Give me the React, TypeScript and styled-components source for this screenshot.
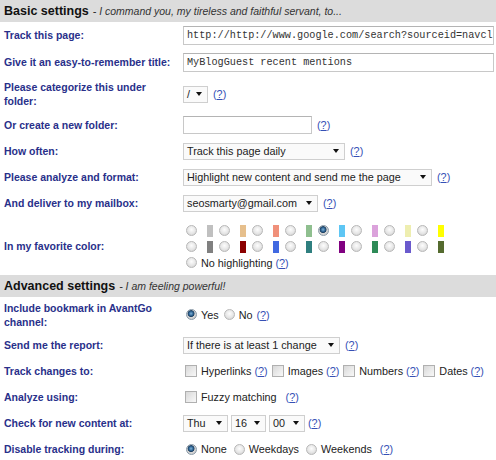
import React from 'react'
import styled, { createGlobalStyle, css } from 'styled-components'

const GlobalStyle = createGlobalStyle`
  body {
    margin: 0;
    background: #fff;
    font-family: "Liberation Sans", Arial, sans-serif;
  }
`

const Page = styled.div`
  width: 496px;
  overflow: hidden;
`

const SectionHeader = styled.div`
  height: 22px;
  display: flex;
  align-items: center;
  padding-left: 4px;
  background: #dcdcdc;
  white-space: nowrap;

  .title {
    font-size: 12.5px;
    font-weight: 700;
    color: #111;
  }

  .sub {
    margin-left: 4px;
    font-size: 10.5px;
    font-style: italic;
    color: #333;
  }
`

const Row = styled.div<{ $h: number }>`
  display: grid;
  grid-template-columns: 183px 1fr;
  align-items: center;
  height: ${(p) => p.$h}px;
`

const Label = styled.div`
  padding-left: 4px;
  font-size: 10.5px;
  font-weight: 700;
  line-height: 14px;
  color: #29308a;
`

const Controls = styled.div<{ $gap?: number }>`
  display: flex;
  align-items: center;
  gap: ${(p) => p.$gap ?? 5}px;
  font-size: 10.8px;
  color: #222;
  white-space: nowrap;
`

const TextBox = styled.div<{ $w: number; $h?: number }>`
  box-sizing: border-box;
  width: ${(p) => p.$w}px;
  height: ${(p) => p.$h ?? 19}px;
  display: flex;
  align-items: center;
  padding-left: 3px;
  border: 1px solid #c8c8c8;
  border-top-color: #b4b4b4;
  background: #fff;
  font-family: "Liberation Mono", "Courier New", monospace;
  font-size: 10.2px;
  color: #333;
  overflow: hidden;
  white-space: nowrap;
`

const SelectBox = styled.div<{ $w: number }>`
  box-sizing: border-box;
  width: ${(p) => p.$w}px;
  height: 17px;
  display: flex;
  align-items: center;
  justify-content: space-between;
  padding: 0 5px 0 3px;
  border: 1px solid #cfcfcf;
  background: #fafafa;
  font-size: 10.8px;
  color: #222;
`

const Help = styled.span`
  color: #3550b5;
  font-size: 10.8px;

  u {
    text-decoration: underline;
  }
`

const Radio = styled.span<{ $checked?: boolean }>`
  display: inline-block;
  flex: none;
  box-sizing: border-box;
  width: 11px;
  height: 11px;
  border-radius: 50%;
  border: 1px solid #b8b8b8;
  background: radial-gradient(circle at 50% 40%, #fdfdfd 0%, #e6e6e6 55%, #c9c9c9 100%);

  ${(p) =>
    p.$checked &&
    css`
      border-color: #8a9aa8;
      background: radial-gradient(
        circle at 45% 40%,
        #7fb2d8 0%,
        #2a5f8e 30%,
        #1d3f60 42%,
        #d6d6d6 52%,
        #c4c4c4 100%
      );
    `}
`

const Check = styled.span`
  display: inline-block;
  flex: none;
  box-sizing: border-box;
  width: 12px;
  height: 12px;
  border: 1px solid #b0b0b0;
  background: linear-gradient(135deg, #d8d8d8 0%, #ececec 60%, #f8f8f8 100%);
`

const Option = styled.span<{ $ml?: number }>`
  display: inline-flex;
  align-items: center;
  gap: 4px;
  margin-left: ${(p) => p.$ml ?? 0}px;
`

const Swatches = styled.div`
  display: flex;
  flex-direction: column;
`

const SwatchRow = styled.div`
  display: flex;
  align-items: center;
  height: 16px;
  padding-left: 3px;
`

const Pair = styled.span`
  display: inline-flex;
  align-items: center;
  width: 33px;
`

const Swatch = styled.span<{ $c: string }>`
  display: inline-block;
  width: 6px;
  height: 12px;
  margin-left: 10px;
  background: ${(p) => p.$c};
`

const NoHighlight = styled.div`
  display: flex;
  align-items: center;
  gap: 4px;
  margin-top: 2px;
  padding-left: 3px;
  font-size: 10.8px;
  color: #222;
`

const Arrow = () => (
  <svg width="6" height="4" viewBox="0 0 6 4">
    <path d="M0 0 L6 0 L3 4 Z" fill="#111" />
  </svg>
)

const Select = ({ w, text }: { w: number; text: string }) => (
  <SelectBox $w={w}>
    <span>{text}</span>
    <Arrow />
  </SelectBox>
)

const Q = () => (
  <Help>
    (<u>?</u>)
  </Help>
)

const topColors = ['#c0c0c0', '#e6bf8c', '#f0907a', '#8fbf8f', '#5ec6f4', '#dba2db', '#eeeeb0', '#ffff00']
const bottomColors = ['#808080', '#8b0000', '#4169e1', '#2f7f7f', '#800080', '#2e8b57', '#6a5acd', '#556b2f']

const App = () => {
  return (
    <Page>
      <GlobalStyle />
      <SectionHeader>
        <span className="title">Basic settings</span>
        <span className="sub">- I command you, my tireless and faithful servant, to...</span>
      </SectionHeader>

      <Row $h={26}>
        <Label>Track this page:</Label>
        <Controls>
          <TextBox $w={311}>http://http://www.google.com/search?sourceid=navcl</TextBox>
        </Controls>
      </Row>
      <Row $h={28}>
        <Label>Give it an easy-to-remember title:</Label>
        <Controls>
          <TextBox $w={311}>MyBlogGuest recent mentions</TextBox>
        </Controls>
      </Row>
      <Row $h={36}>
        <Label>
          Please categorize this under
          <br />
          folder:
        </Label>
        <Controls>
          <Select w={25} text="/" />
          <Q />
        </Controls>
      </Row>
      <Row $h={26}>
        <Label>Or create a new folder:</Label>
        <Controls>
          <TextBox $w={129} $h={18} />
          <Q />
        </Controls>
      </Row>
      <Row $h={26}>
        <Label>How often:</Label>
        <Controls>
          <Select w={162} text="Track this page daily" />
          <Q />
        </Controls>
      </Row>
      <Row $h={26}>
        <Label>Please analyze and format:</Label>
        <Controls>
          <Select w={249} text="Highlight new content and send me the page" />
          <Q />
        </Controls>
      </Row>
      <Row $h={26}>
        <Label>And deliver to my mailbox:</Label>
        <Controls>
          <Select w={135} text="seosmarty@gmail.com" />
          <Q />
        </Controls>
      </Row>
      <Row $h={59}>
        <Label>In my favorite color:</Label>
        <Swatches>
          <SwatchRow>
            {topColors.map((c, i) => (
              <Pair key={c}>
                <Radio $checked={i === 4} />
                <Swatch $c={c} />
              </Pair>
            ))}
          </SwatchRow>
          <SwatchRow>
            {bottomColors.map((c) => (
              <Pair key={c}>
                <Radio />
                <Swatch $c={c} />
              </Pair>
            ))}
          </SwatchRow>
          <NoHighlight>
            <Radio />
            <span>
              No highlighting <Q />
            </span>
          </NoHighlight>
        </Swatches>
      </Row>

      <SectionHeader>
        <span className="title">Advanced settings</span>
        <span className="sub">- I am feeling powerful!</span>
      </SectionHeader>

      <Row $h={35}>
        <Label>
          Include bookmark in AvantGo
          <br />
          channel:
        </Label>
        <Controls $gap={0}>
          <Option $ml={3}>
            <Radio $checked />
            Yes
          </Option>
          <Option $ml={5}>
            <Radio />
            No <Q />
          </Option>
        </Controls>
      </Row>
      <Row $h={26}>
        <Label>Send me the report:</Label>
        <Controls>
          <Select w={157} text="If there is at least 1 change" />
          <Q />
        </Controls>
      </Row>
      <Row $h={26}>
        <Label>Track changes to:</Label>
        <Controls $gap={0}>
          <Option $ml={2}>
            <Check />
            <span>
              Hyperlinks <Q />
            </span>
          </Option>
          <Option $ml={4}>
            <Check />
            <span>
              Images <Q />
            </span>
          </Option>
          <Option $ml={4}>
            <Check />
            <span>
              Numbers <Q />
            </span>
          </Option>
          <Option $ml={4}>
            <Check />
            <span>
              Dates <Q />
            </span>
          </Option>
        </Controls>
      </Row>
      <Row $h={26}>
        <Label>Analyze using:</Label>
        <Controls $gap={0}>
          <Option $ml={2}>
            <Check />
            <span>Fuzzy matching</span>
          </Option>
          <Option $ml={9}>
            <Q />
          </Option>
        </Controls>
      </Row>
      <Row $h={26}>
        <Label>Check for new content at:</Label>
        <Controls $gap={3}>
          <Select w={45} text="Thu" />
          <Select w={35} text="16" />
          <Select w={36} text="00" />
          <Q />
        </Controls>
      </Row>
      <Row $h={26}>
        <Label>Disable tracking during:</Label>
        <Controls $gap={0}>
          <Option $ml={3}>
            <Radio $checked />
            None
          </Option>
          <Option $ml={7}>
            <Radio />
            Weekdays
          </Option>
          <Option $ml={7}>
            <Radio />
            Weekends
          </Option>
          <Option $ml={8}>
            <Q />
          </Option>
        </Controls>
      </Row>
    </Page>
  )
}

export default App
